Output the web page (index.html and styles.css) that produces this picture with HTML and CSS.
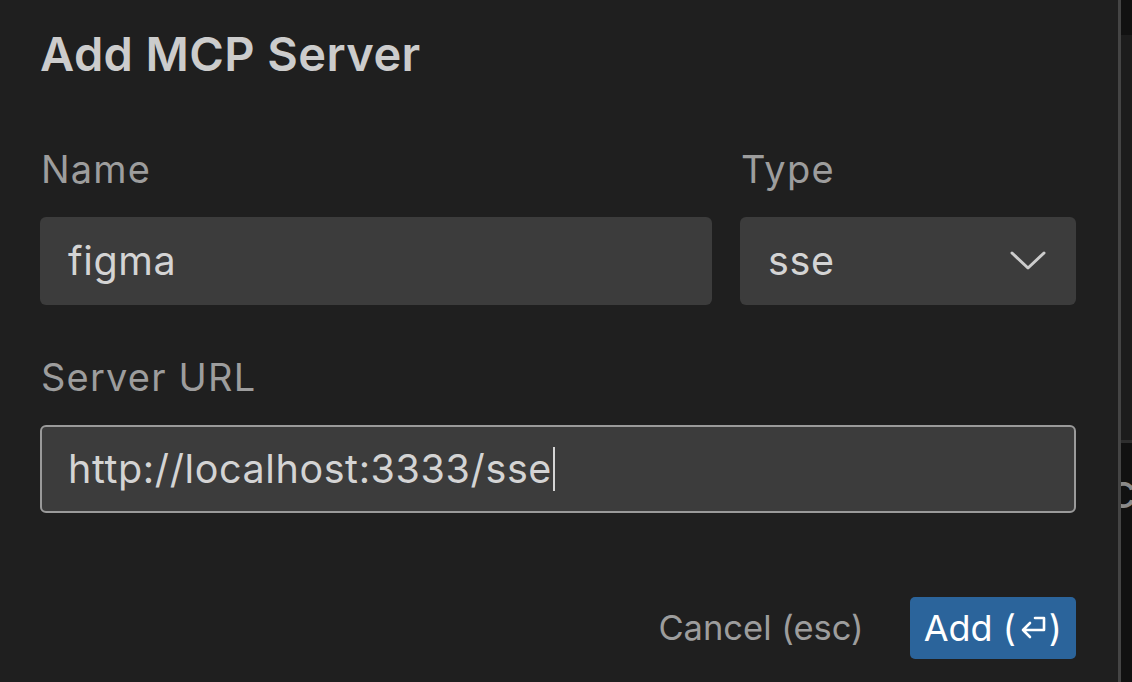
FILE: index.html
```html
<!DOCTYPE html>
<html lang="en">
<head>
<meta charset="utf-8">
<title>Add MCP Server</title>
<link rel="stylesheet" href="styles.css">
</head>
<body>
<div class="page">
  <main class="dialog">
    <h1 class="title">Add MCP Server</h1>
    <div class="row">
      <div class="field field-name">
        <label class="label">Name</label>
        <div class="input">figma</div>
      </div>
      <div class="field field-type">
        <label class="label">Type</label>
        <div class="input select">
          <span>sse</span>
          <svg class="chevron" width="36" height="20" viewBox="0 0 36 20"><path d="M2 2 L18 17 L34 2" fill="none" stroke="#cccccc" stroke-width="3" stroke-linecap="round" stroke-linejoin="round"/></svg>
        </div>
      </div>
    </div>
    <div class="field">
      <label class="label">Server URL</label>
      <div class="input focused"><span>http://localhost:3333/sse</span><span class="caret"></span></div>
    </div>
    <div class="actions">
      <span class="cancel">Cancel (esc)</span>
      <button class="primary">Add (<svg class="enter" width="26" height="26" viewBox="0 0 26 26"><path d="M15 3 H24 V15 H3 M10 8 L3 15 L10 22" fill="none" stroke="#ffffff" stroke-width="2.6" stroke-linecap="round" stroke-linejoin="round"/></svg>)</button>
    </div>
  </main>
  <div class="divider"></div>
  <aside class="side">
    <div class="side-top"></div>
    <div class="side-mid"></div>
    <div class="side-line"></div>
    <div class="side-bottom"><span class="side-glyph">c</span></div>
  </aside>
</div>
</body>
</html>
```

FILE: styles.css
```css
html, body {
  margin: 0;
  padding: 0;
  background: #1f1f1f;
}

body {
  font-family: Inter, "Liberation Sans", sans-serif;
  color: #cccccc;
}

.page {
  display: flex;
  width: 1132px;
  height: 682px;
  overflow: hidden;
}

.dialog {
  width: 1118px;
  box-sizing: border-box;
  padding: 26px 42px 0 40px;
  background: #1f1f1f;
  display: flex;
  flex-direction: column;
}

.title {
  margin: 0;
  font-size: 47px;
  line-height: 56px;
  font-weight: 600;
  color: #cccccc;
  letter-spacing: 0.4px;
}

.row {
  display: flex;
  gap: 28px;
  margin-top: 65px;
}

.field {
  display: flex;
  flex-direction: column;
  gap: 26px;
}

.field-name {
  flex: 0 0 672px;
}

.field-type {
  flex: 1;
}

.row + .field {
  margin-top: 50px;
}

.label {
  font-size: 38px;
  line-height: 44px;
  color: #9d9d9d;
  letter-spacing: 1.2px;
  padding-left: 1px;
}

.input {
  height: 88px;
  box-sizing: border-box;
  background: #3c3c3c;
  border-radius: 6px;
  padding: 0 28px;
  display: flex;
  align-items: center;
  font-size: 39.5px;
  line-height: 44px;
  letter-spacing: 0.6px;
  color: #d4d4d4;
}

.select {
  justify-content: space-between;
  padding-right: 30px;
}

.chevron {
  display: block;
}

.focused {
  border: 2px solid #9a9a9a;
  padding-left: 26px;
}

.caret {
  display: inline-block;
  width: 2px;
  height: 44px;
  background: #d4d4d4;
  margin-left: 1px;
}

.actions {
  display: flex;
  justify-content: flex-end;
  align-items: center;
  gap: 46px;
  margin-top: 84px;
}

.cancel {
  font-size: 34.5px;
  line-height: 44px;
  color: #9d9d9d;
}

.primary {
  height: 62px;
  box-sizing: border-box;
  padding: 0 14px;
  border: none;
  border-radius: 5px;
  background: #2b649b;
  color: #ffffff;
  font-family: Inter, "Liberation Sans", sans-serif;
  font-size: 36px;
  line-height: 44px;
  display: flex;
  align-items: center;
}

.enter {
  margin: 0 3px 0 4px;
}

.divider {
  width: 3px;
  background: #444444;
  flex: 0 0 3px;
}

.side {
  flex: 1;
  display: flex;
  flex-direction: column;
  overflow: hidden;
}

.side-top {
  height: 35px;
  background: #111111;
}

.side-mid {
  height: 405px;
  background: #1c1c1c;
}

.side-line {
  height: 3px;
  background: #2e2e2e;
}

.side-bottom {
  flex: 1;
  background: #111111;
  overflow: hidden;
}

.side-glyph {
  display: block;
  margin-left: -12px;
  margin-top: 24px;
  font-size: 48px;
  line-height: 48px;
  color: #8a8a8a;
}
```
